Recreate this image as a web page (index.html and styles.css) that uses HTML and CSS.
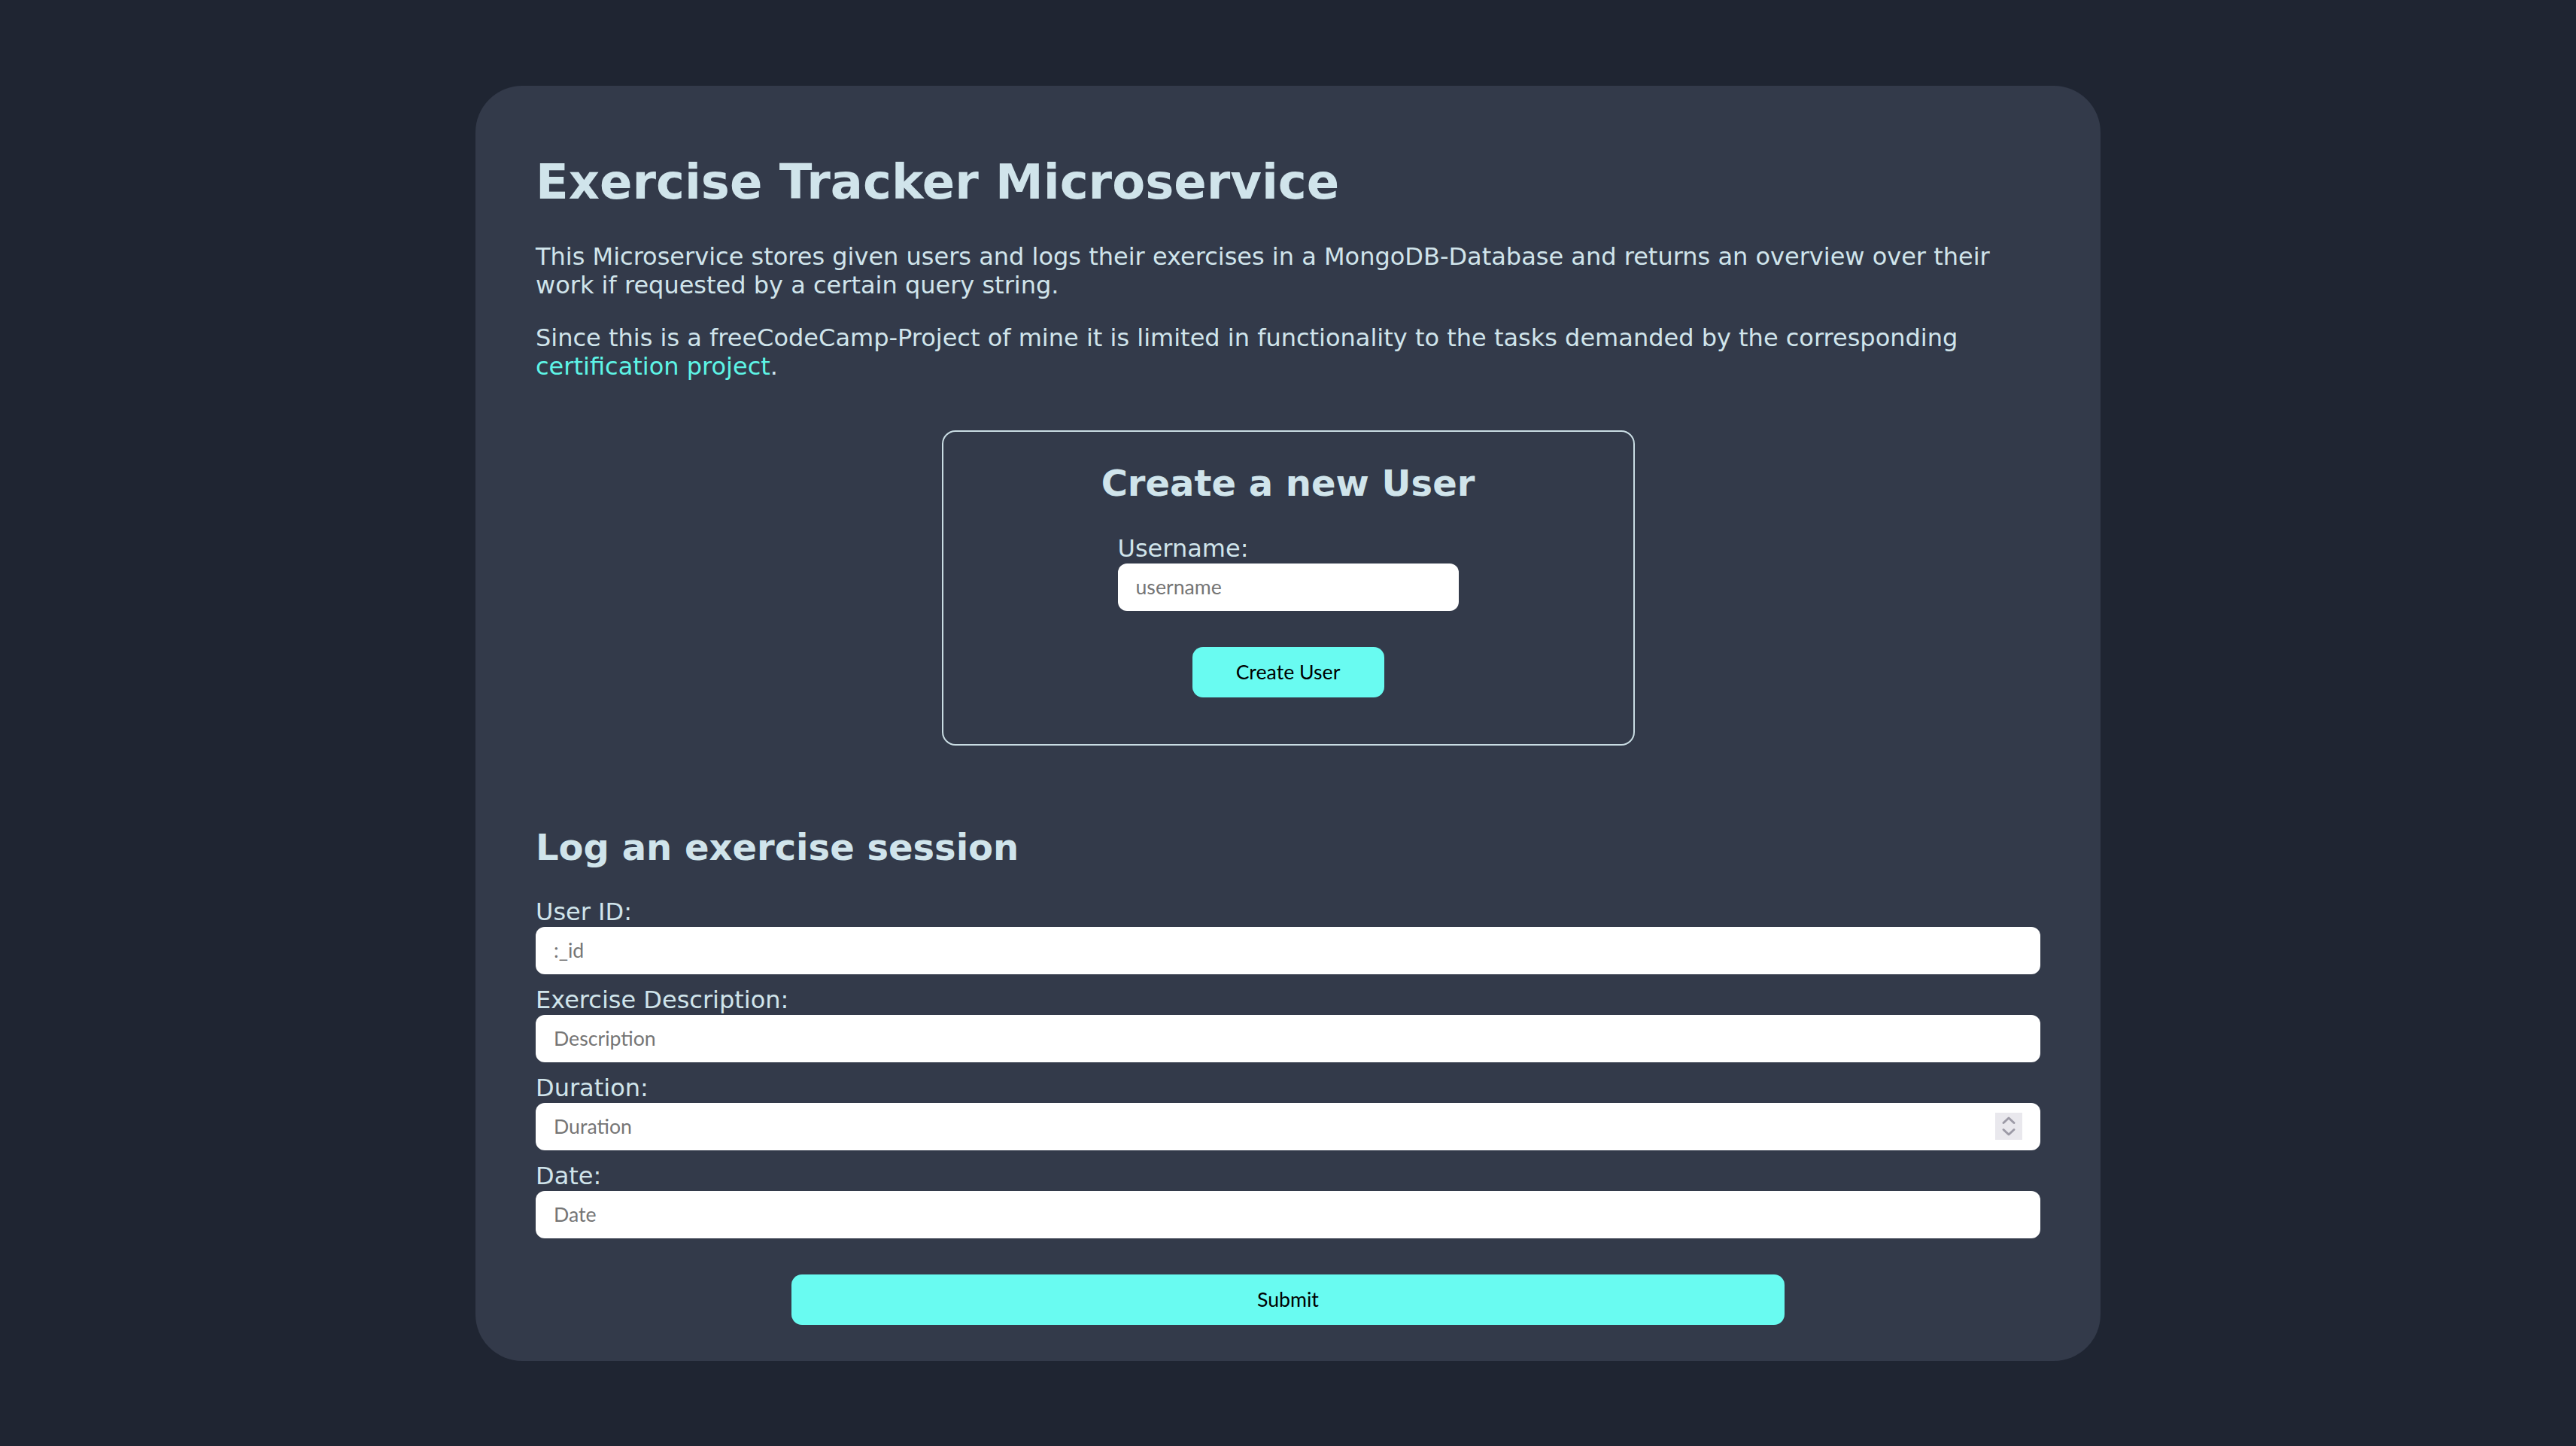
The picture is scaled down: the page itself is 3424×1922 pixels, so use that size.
FILE: index.html
```
<!DOCTYPE html>
<html lang="en">
<head>
<meta charset="utf-8">
<title>Exercise Tracker Microservice</title>
<link rel="stylesheet" href="styles.css">
</head>
<body>
<main class="card">
  <h1 class="title">Exercise Tracker Microservice</h1>
  <p class="text">This Microservice stores given users and logs their exercises in a MongoDB-Database and returns an overview over their work if requested by a certain query string.</p>
  <p class="text">Since this is a freeCodeCamp-Project of mine it is limited in functionality to the tasks demanded by the corresponding <a class="link" href="#">certification project</a>.</p>

  <section class="user-box">
    <h2 class="box-title">Create a new User</h2>
    <form class="user-form">
      <label class="label" for="uname">Username:</label>
      <input class="field" id="uname" type="text" placeholder="username">
      <button class="btn btn-create" type="button">Create User</button>
    </form>
  </section>

  <section class="log">
    <h2 class="log-title">Log an exercise session</h2>
    <form class="log-form">
      <label class="label" for="uid">User ID:</label>
      <input class="field" id="uid" type="text" placeholder=":_id">
      <label class="label" for="desc">Exercise Description:</label>
      <input class="field" id="desc" type="text" placeholder="Description">
      <label class="label" for="dur">Duration:</label>
      <div class="num-wrap">
        <input class="field field-num" id="dur" type="number" placeholder="Duration">
        <span class="spinner">
          <svg width="36" height="36" viewBox="0 0 36 36" aria-hidden="true">
            <path d="M11 13.5 L18 7 L25 13.5" fill="none" stroke="#9c9aa6" stroke-width="3" stroke-linejoin="round" stroke-linecap="round"/>
            <path d="M11 22.5 L18 29 L25 22.5" fill="none" stroke="#9c9aa6" stroke-width="3" stroke-linejoin="round" stroke-linecap="round"/>
          </svg>
        </span>
      </div>
      <label class="label" for="date">Date:</label>
      <input class="field" id="date" type="text" placeholder="Date">
      <button class="btn btn-submit" type="button">Submit</button>
    </form>
  </section>
</main>
</body>
</html>
```
FILE: styles.css
```
html, body {
  margin: 0;
  padding: 0;
}

body {
  background: #1f2532;
  min-height: 100vh;
  display: flex;
  align-items: center;
  justify-content: center;
  font-family: "DejaVu Sans", sans-serif;
  color: #d0e4eb;
}

.card {
  box-sizing: border-box;
  width: 2160px;
  padding: 48px 80px;
  background: #333a4a;
  border-radius: 62px;
  display: flex;
  flex-direction: column;
}

.title {
  font-size: 64px;
  font-weight: bold;
  margin: 43px 0 43px;
  line-height: normal;
}

.text {
  font-size: 32px;
  margin: 0 0 32px;
  line-height: normal;
}

.text + .text {
  margin-bottom: 0;
}

.link {
  color: #5ef4e6;
  text-decoration: none;
}

.user-box {
  box-sizing: border-box;
  align-self: center;
  width: 921px;
  height: 419px;
  margin-top: 66px;
  border: 2px solid #c9dce3;
  border-radius: 18px;
  display: flex;
  flex-direction: column;
  align-items: center;
}

.box-title {
  font-size: 48px;
  font-weight: bold;
  margin: 40px 0 40px;
  line-height: normal;
}

.user-form {
  width: 453px;
  display: flex;
  flex-direction: column;
}

.label {
  display: block;
  font-size: 32px;
  line-height: normal;
}

.field {
  box-sizing: border-box;
  display: block;
  width: 100%;
  height: 63px;
  margin: 1px 0 0;
  padding: 0 24px;
  border: none;
  border-radius: 12px;
  background: #ffffff;
  color: #000;
  font-family: "Lato", sans-serif;
  font-size: 26.67px;
  outline: none;
}

.field::placeholder {
  color: #757575;
}

.btn {
  box-sizing: border-box;
  height: 67px;
  border: none;
  border-radius: 14px;
  background: #69fbf1;
  color: #000;
  font-family: "Lato", sans-serif;
  font-size: 26.67px;
  padding: 0;
  cursor: pointer;
}

.btn-create {
  align-self: center;
  width: 255px;
  margin-top: 48px;
}

.log {
  display: flex;
  flex-direction: column;
}

.log-title {
  font-size: 48px;
  font-weight: bold;
  margin: 107px 0 39px;
  line-height: normal;
}

.log-form {
  display: flex;
  flex-direction: column;
}

.log-form .field {
  margin-bottom: 15px;
}

.log-form .field:last-of-type {
  margin-bottom: 0;
}

.num-wrap {
  position: relative;
  margin-bottom: 15px;
}

.num-wrap .field {
  margin-bottom: 0;
}

.field-num {
  -moz-appearance: textfield;
}

.field-num::-webkit-inner-spin-button,
.field-num::-webkit-outer-spin-button {
  -webkit-appearance: none;
  margin: 0;
}

.spinner {
  position: absolute;
  right: 24px;
  top: 14px;
  width: 36px;
  height: 36px;
  background: #e9e8ed;
  display: block;
}

.spinner svg {
  display: block;
}

.btn-submit {
  align-self: center;
  width: 1320px;
  margin-top: 48px;
}
```
